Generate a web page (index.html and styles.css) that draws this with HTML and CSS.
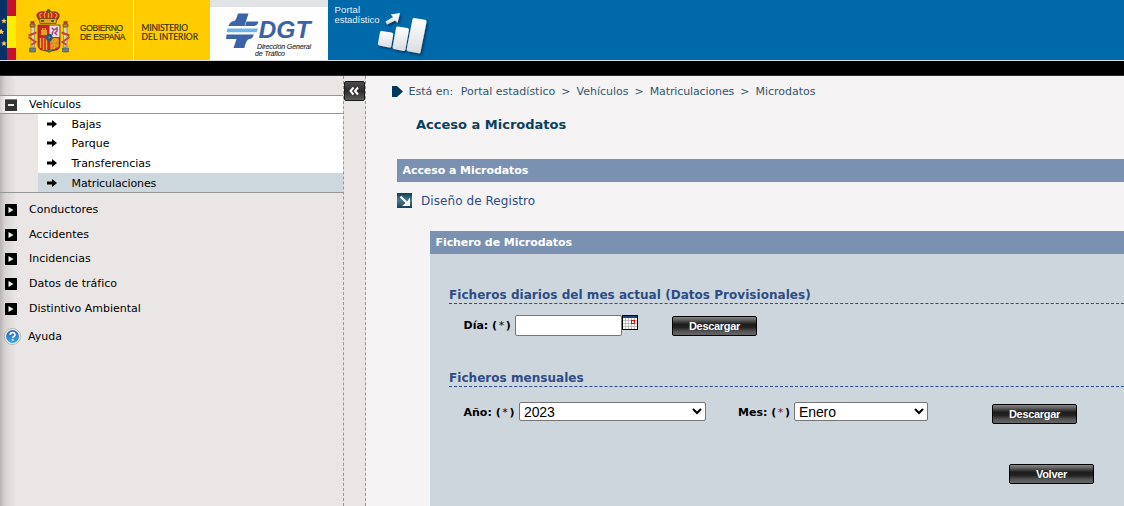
FILE: index.html
```html
<!DOCTYPE html>
<html lang="es">
<head>
<meta charset="utf-8">
<title>Portal estadístico - Microdatos</title>
<link rel="stylesheet" href="styles.css">
</head>
<body>
<header class="header">
  <svg class="gov" width="210" height="60" viewBox="0 0 210 60">
    <rect width="210" height="60" fill="#fc0"/>
    <rect width="7" height="60" fill="#0a3068"/>
    <rect x="7" width="9" height="60" fill="#c8102e"/>
    <rect x="7" y="16" width="9" height="32" fill="#ffed00"/>
    <g fill="#f0d24c">
      <path d="M4 18l.8 1.900 2.100.1-1.600 1.300.5 2.100L4 22.300l-1.800 1.100.5-2.100L1.100 20l2.100-.1z"/>
      <path d="M1.500 29l.8 1.900 2.100.1-1.600 1.300.5 2.100-1.800-1.100-1.500.8v-4z"/>
      <path d="M4 40.500l.8 1.900 2.100.1-1.600 1.300.5 2.100L4 44.800l-1.800 1.100.5-2.100-1.600-1.300 2.100-.1z"/>
    </g>
    <g stroke-width=".7" stroke="#5c3a1c">
      <path fill="#c62a2a" d="M39 20q-5-6 1-8 3-1 5 0 3-2 7 0 4-1 6 1 3 3-1 7z"/>
      <path fill="#e4a51b" d="M39 18.500h18l-1 5H40z"/>
      <path fill="none" stroke="#e0a020" stroke-width="1.200" d="M41 18q-3-4 1-5M45 18q-2-4 1-6M51 18q2-4-1-6M55 18q4-3 0-5M48.500 18v-7"/>
      <circle cx="48.500" cy="11" r="1.600" fill="#3b6d4c"/>
      <path fill="#276e5a" d="M41 20h3v2h-3zm10 0h3v2h-3z" stroke="none"/>
    </g>
    <g>
      <path fill="#c9252b" stroke="#683423" stroke-width=".8" d="M38 25h22v20q0 5-6 5.500-3 .5-5 1.500-2-1-5-1.500-6-.5-6-5.500z"/>
      <path fill="#e8dde2" d="M49.500 25.500h10V37h-10z"/>
      <path fill="#e6a21c" d="M41 35v-5h1v-2h1.500v2h1v-2H46v2h1v5z"/>
      <path fill="none" stroke="#a0497d" stroke-width="1.500" d="M52 28l2 2 3-2v3l-2 2 2 2m-4-4l-1 4"/>
      <path stroke="#efb020" stroke-width="1.400" d="M40.500 38v10M43.500 38v12M46.500 38v12"/>
      <path fill="#dd7a2c" stroke="#e6a31d" stroke-width="1.300" d="M51 39h7v7l-7 3zM51 39l7 8M58 39l-7 8M54.500 38v11"/>
      <path fill="#4a8055" d="M46 50h6l-3 3z"/>
      <ellipse cx="49.300" cy="37.500" rx="3.200" ry="3.800" fill="#24567d"/>
      <circle cx="49.300" cy="37.500" r="1.100" fill="#7aa052"/>
    </g>
    <g>
      <path fill="#ddd6b6" stroke="#76715e" stroke-width=".6" d="M31 27h3.500v20H31zM63.500 27H67v20h-3.500z"/>
      <path fill="#b78428" stroke="#51452d" stroke-width=".6" d="M30 24h5v3h-5zM63 24h5v3h-5z"/>
      <path fill="#c43633" d="M30.500 21h4v3h-4zM63.500 21h4v3h-4z"/>
      <path fill="#667f83" stroke="#3f5560" stroke-width=".6" d="M29.500 48h6v4h-6zM62.500 48h6v4h-6z"/>
      <path fill="none" stroke="#c74234" stroke-width="2" d="M28.500 35.500l8-3M28.500 37l7 5-4 3M69.500 35.500l-8-3M69.500 37l-7 5 4 3"/>
    </g>
    <rect x="133" width="1" height="60" fill="#fffbe2"/>
    <g class="gov-text">
      <text x="80" y="31" textLength="43">GOBIERNO</text>
      <text x="80" y="39.500" textLength="45.500">DE ESPAÑA</text>
    </g>
    <g class="min-text">
      <text x="141.500" y="31" textLength="46.500">MINISTERIO</text>
      <text x="141.500" y="40" textLength="56.500">DEL INTERIOR</text>
    </g>
  </svg>
  <svg class="dgt" width="118" height="60" viewBox="0 0 118 60">
    <rect width="118" height="60" fill="#fefefe"/>
    <rect width="118" height="7" fill="#e2e3e7"/>
    <path fill="#3b63a6" d="M28 13.500h10.500L34.500 26H18.500q1.500-4.500 5.500-5 2-.3 4-7.500zM36.500 21.500h12q-1 4.500-5 4.500h-8.500z"/>
    <path fill="#6eb4e4" d="M17.500 28.500H48l-1.500 3.800h-30z"/>
    <path fill="#3b63a6" d="M16.500 34.500h27.300q-1 4.300-4.500 4.500-3 .5-5 9H23.500l3-9H16z"/>
    <text class="dgt-name" x="48.500" y="38" textLength="52" lengthAdjust="spacingAndGlyphs">DGT</text>
    <text class="dgt-sub" x="47" y="49" textLength="54">Dirección General</text>
    <text class="dgt-sub" x="45" y="55.500" textLength="30">de Tráfico</text>
  </svg>
  <svg class="portal" width="120" height="60" viewBox="0 0 120 60">
    <defs>
      <linearGradient id="bar" x1="0" y1="0" x2="0" y2="1"><stop offset="0" stop-color="#fff"/><stop offset="1" stop-color="#d9dce0"/></linearGradient>
      <filter id="shadow" x="-30%" y="-30%" width="170%" height="170%"><feDropShadow dx="1.500" dy="2" stdDeviation="1.200" flood-color="#012c4d" flood-opacity=".7"/></filter>
    </defs>
    <text class="portal-text" x="6.500" y="13" textLength="25.500">Portal</text>
    <text class="portal-text" x="6.500" y="23" textLength="45">estadístico</text>
    <g filter="url(#shadow)" fill="url(#bar)">
      <path d="M53.500 31l10 1.600q2 .3 1.700 2l-2 12q-.3 1.500-2 1l-10-2q-1.600-.4-1.300-2l2.100-11.300q.4-1.600 1.500-1.300z"/>
      <path d="M69.500 26.500l10 1.600q1.700.3 1.400 2l-3.500 19.500q-.4 1.700-2 1.300l-9.500-2q-1.500-.4-1.200-2l3.300-18.900q.3-1.800 1.500-1.500z"/>
      <path d="M86 18l11 1.800q1.800.3 1.500 2.200L92.500 52q-.3 1.700-2 1.300l-10.500-2q-1.600-.4-1.300-2l5.700-29.800q.3-1.800 1.600-1.500z"/>
      <path d="M57.500 21.500l7.500-4.500-2.300-2.500 9.300-1.500-2.500 10-2.300-2.500-8.200 4z"/>
    </g>
  </svg>
</header>
<div class="black-bar"></div>

<div class="page">
  <nav class="sidebar">
    <div class="item open">
      <svg width="12" height="12" viewBox="0 0 12 12"><rect width="12" height="12" fill="#333"/><path d="M0 .5h12" stroke="#777"/><path d="M3 6h6" stroke="#e8e8e8" stroke-width="2"/></svg>
      <span>Vehículos</span>
    </div>
    <ul class="submenu">
      <li><svg class="arr" width="10" height="8" viewBox="0 0 10 8"><path d="M0 2.500h5V0l5 4-5 4V5.500H0z"/></svg><span>Bajas</span></li>
      <li><svg class="arr" width="10" height="8" viewBox="0 0 10 8"><path d="M0 2.500h5V0l5 4-5 4V5.500H0z"/></svg><span>Parque</span></li>
      <li><svg class="arr" width="10" height="8" viewBox="0 0 10 8"><path d="M0 2.500h5V0l5 4-5 4V5.500H0z"/></svg><span>Transferencias</span></li>
      <li class="current"><svg class="arr" width="10" height="8" viewBox="0 0 10 8"><path d="M0 2.500h5V0l5 4-5 4V5.500H0z"/></svg><span class="tight">Matriculaciones</span></li>
    </ul>
    <div class="closed-items">
      <div class="item"><svg width="12" height="12" viewBox="0 0 12 12"><rect width="12" height="12"/><path d="M3.500 3l5 3-5 3z" fill="#eee"/></svg><span>Conductores</span></div>
      <div class="item"><svg width="12" height="12" viewBox="0 0 12 12"><rect width="12" height="12"/><path d="M3.500 3l5 3-5 3z" fill="#eee"/></svg><span>Accidentes</span></div>
      <div class="item"><svg width="12" height="12" viewBox="0 0 12 12"><rect width="12" height="12"/><path d="M3.500 3l5 3-5 3z" fill="#eee"/></svg><span>Incidencias</span></div>
      <div class="item"><svg width="12" height="12" viewBox="0 0 12 12"><rect width="12" height="12"/><path d="M3.500 3l5 3-5 3z" fill="#eee"/></svg><span>Datos de tráfico</span></div>
      <div class="item"><svg width="12" height="12" viewBox="0 0 12 12"><rect width="12" height="12"/><path d="M3.500 3l5 3-5 3z" fill="#eee"/></svg><span>Distintivo Ambiental</span></div>
    </div>
    <div class="help">
      <svg width="17" height="17" viewBox="0 0 17 17">
        <defs><linearGradient id="ball" x1="0" y1="0" x2="0" y2="1"><stop offset="0" stop-color="#2b66b4"/><stop offset="1" stop-color="#38a4ec"/></linearGradient></defs>
        <circle cx="8.500" cy="8.500" r="8" fill="#f4f4f4" stroke="#a5a5a5" stroke-width=".8"/>
        <circle cx="8.500" cy="8.500" r="6.500" fill="url(#ball)"/>
        <path d="M6.200 7q0-2.500 2.400-2.500T11 6.600q0 1.200-1.200 1.900-1.100.6-1.100 1.500" fill="none" stroke="#fff" stroke-width="1.700"/>
        <rect x="7.800" y="11" width="1.800" height="1.700" fill="#fff"/>
      </svg>
      <span>Ayuda</span>
    </div>
  </nav>
  <div class="strip">
    <button class="collapse" aria-label="Ocultar menú"><svg width="12" height="10" viewBox="0 0 12 10"><path d="M5.500 1.500L2.500 5l3 3.500M10 1.500L7 5l3 3.500" fill="none" stroke="#fff" stroke-width="2"/></svg></button>
  </div>
  <main class="main">
    <div class="crumbs">
      <svg width="11" height="11" viewBox="0 0 11 11"><path d="M0 0h5l6 5.500L5 11H0z" fill="#003a58"/></svg>
      <span class="here">Está en:</span><span>Portal estadístico</span><span>&gt;</span><span>Vehículos</span><span>&gt;</span><span class="tight">Matriculaciones</span><span>&gt;</span><span>Microdatos</span>
    </div>
    <h1 class="title">Acceso a Microdatos</h1>
    <h2 class="bar">Acceso a Microdatos</h2>
    <a class="doc-link">
      <svg width="15" height="15" viewBox="0 0 15 15"><defs><linearGradient id="tile" x1="0" y1="0" x2="0" y2="1"><stop offset="0" stop-color="#0c4158"/><stop offset=".5" stop-color="#50788a"/><stop offset="1" stop-color="#0e4259"/></linearGradient></defs><rect width="15" height="15" fill="url(#tile)"/><path d="M3.500 3.500l6 6" stroke="#fff" stroke-width="2.200"/><path d="M13 4.500V13H5l3-2.500 2.500-2.500z" fill="#fff"/></svg>
      <span>Diseño de Registro</span>
    </a>
    <section class="panel">
      <h2 class="bar">Fichero de Microdatos</h2>
      <h3 class="group daily">Ficheros diarios del mes actual (Datos Provisionales)</h3>
      <div class="row day-row">
        <label for="dia">Día: <span class="req">(<i>*</i>)</span></label>
        <input id="dia" class="date" type="text">
        <svg class="cal" width="16" height="15" viewBox="0 0 16 15" shape-rendering="crispEdges">
          <rect width="16" height="15"/><rect x="1" y="1" width="14" height="2" fill="#233f86"/><rect x="1" y="3" width="14" height="11" fill="#fff"/>
          <path d="M3.500 3v11M6.500 3v11M9.500 3v11M12.500 3v11M1 5.500h14M1 8.500h14M1 11.500h14" stroke="#c0c0c0"/>
          <rect x="9.500" y="5.500" width="3" height="3" fill="#fff" stroke="#f00"/>
        </svg>
        <button class="btn">Descargar</button>
      </div>
      <h3 class="group">Ficheros mensuales</h3>
      <div class="row month-row">
        <label for="anio">Año: <span class="req">(<i>*</i>)</span></label>
        <select id="anio" class="year"><option>2023</option></select>
        <label class="month-label" for="mes">Mes: <span class="req">(<i class="dark-red">*</i>)</span></label>
        <select id="mes" class="month"><option>Enero</option></select>
        <button class="btn">Descargar</button>
      </div>
      <div class="back"><button class="btn">Volver</button></div>
    </section>
  </main>
</div>
</body>
</html>
```
FILE: styles.css
```css
* { box-sizing: border-box; }
body {
  margin: 0;
  height: 506px;
  overflow: hidden;
  font: 11px/14px Verdana, "DejaVu Sans", sans-serif;
  color: #000;
  background: #f5f3f4;
}
svg { display: block; flex: none; }
h1, h2, h3, ul { margin: 0; padding: 0; }
.tight { letter-spacing: -.1px; }

.header { display: flex; height: 60px; background: #0069aa; }
.gov-text { font: 8.500px "Liberation Sans", Arial, sans-serif; fill: #3c3416; stroke: #3c3416; stroke-width: .2; }
.min-text { font: 8.500px Lato, sans-serif; fill: #3c3416; stroke: #3c3416; stroke-width: .2; }
.dgt-name { font: italic bold 23px "Liberation Sans", Arial, sans-serif; fill: #3b63a6; }
.dgt-sub { font: italic 7px "Liberation Sans", Arial, sans-serif; fill: #222; stroke: #222; stroke-width: .1; }
.portal-text { font: 9.500px "Liberation Sans", Arial, sans-serif; fill: #e4f0fa; }
.black-bar { height: 16px; background: #000; border-top: 1px solid #ddd; border-bottom: 1px solid #003a58; }

.page { display: flex; height: 430px; }
.sidebar {
  width: 343px;
  padding-top: 19px;
  background: linear-gradient(90deg, #b8b4b4 0, #d8d4d4 5px, #eae6e5 16px);
}
.item { display: flex; align-items: center; gap: 12px; height: 24.750px; padding-left: 5px; }
.item.open {
  height: 19px;
  background: linear-gradient(90deg, #d4d1d1 0, #f4f3f3 6px, #fff 14px);
  border-top: 1px solid #969696;
  border-bottom: 1px solid #969696;
}
.submenu { list-style: none; padding-left: 38px; border-bottom: 1px solid #969696; }
.submenu li { display: flex; align-items: center; height: 19.600px; padding-left: 9px; background: #fff; }
.submenu li span { padding-top: 2px; }
.submenu .current { background: #cdd7de; }
.arr { margin-right: 14.500px; }
.closed-items { padding-top: 4px; }
.help { display: flex; align-items: center; gap: 7px; padding: 7px 0 0 4px; }

.strip {
  width: 23px;
  padding-top: 5px;
  background: #eae6e5;
  border-left: 1px dashed #969696;
  border-right: 1px dashed #969696;
}
.collapse {
  display: grid;
  place-items: center;
  width: 21px;
  height: 20px;
  padding: 0 2px 1px 0;
  border: 1px solid #1c1c1c;
  border-radius: 2px;
  background: linear-gradient(#4c4c4c, #2c2c2c 50%, #5c5c5c);
}

.main { flex: 1; min-width: 0; padding: 8px 0 0 31px; }
.crumbs { display: flex; align-items: center; gap: 6px; margin-left: -5px; color: #33566c; height: 14px; }
.crumbs svg { margin-right: -.5px; }
.crumbs span { padding-top: 1px; }
.crumbs .here { margin-right: 1.500px; }
.crumbs .tight { letter-spacing: -.12px; }
.title { margin: 18px 0 0 19px; font-size: 13px; line-height: 18px; color: #0b3f5e; }
.bar { height: 23px; padding-left: 5.500px; font-size: 11px; line-height: 23px; letter-spacing: -.07px; color: #fff; background: #7b91b1; }
.title + .bar { margin-top: 25px; }
.doc-link { display: flex; align-items: center; gap: 9px; margin-top: 11px; height: 15px; font-size: 12px; letter-spacing: .07px; color: #2c4c86; }
.panel { margin: 23px 0 0 33px; height: 275px; background: #ced6dd; }
.group { margin-left: 19px; height: 19px; font-size: 12px; line-height: 20px; letter-spacing: .04px; color: #2c4c86; border-bottom: 1px dashed #2c4c86; }
.daily { margin-top: 31px; }
.row { display: flex; padding-left: 33.500px; font-weight: bold; }
.row label { width: 51.500px; padding-top: 1px; line-height: 20px; white-space: nowrap; }
.req { letter-spacing: 1.600px; }
.req i { font-style: normal; font-weight: normal; }
.req .dark-red { color: #6b1616; }
.day-row { height: 53px; padding-top: 11px; margin-bottom: 11px; }
.date { width: 107px; height: 21px; padding: 1px 2px; border: 1px solid #767676; border-radius: 2px; background: #fff; }
.btn {
  width: 85px;
  height: 20px;
  padding: 0;
  border: 1px solid #000;
  border-radius: 2px;
  font: bold 11px/16px "Liberation Sans", Arial, sans-serif;
  letter-spacing: -.3px;
  color: #fff;
  background: linear-gradient(#888 0, #555 20%, #1c1c1c 40%, #222 58%, #555 80%, #666);
}
.day-row .btn { margin: 1px 0 0 34px; }
.month-row { padding-top: 15px; }
.month-row label { width: 55.500px; }
.month-row .month-label { width: 56px; margin-left: 32px; }
.month-row select {
  height: 19px;
  padding: 0;
  border: 1px solid #767676;
  border-radius: 2px;
  font: 14px "Liberation Sans", Arial, sans-serif;
  letter-spacing: -.1px;
  color: #000;
  background-color: #fff;
}
.month-row .year { width: 187px; }
.month-row .month { width: 134px; }
.month-row .btn { margin: 2px 0 0 64px; }
.back { display: flex; justify-content: flex-end; padding: 40px 30px 0 0; }
```
